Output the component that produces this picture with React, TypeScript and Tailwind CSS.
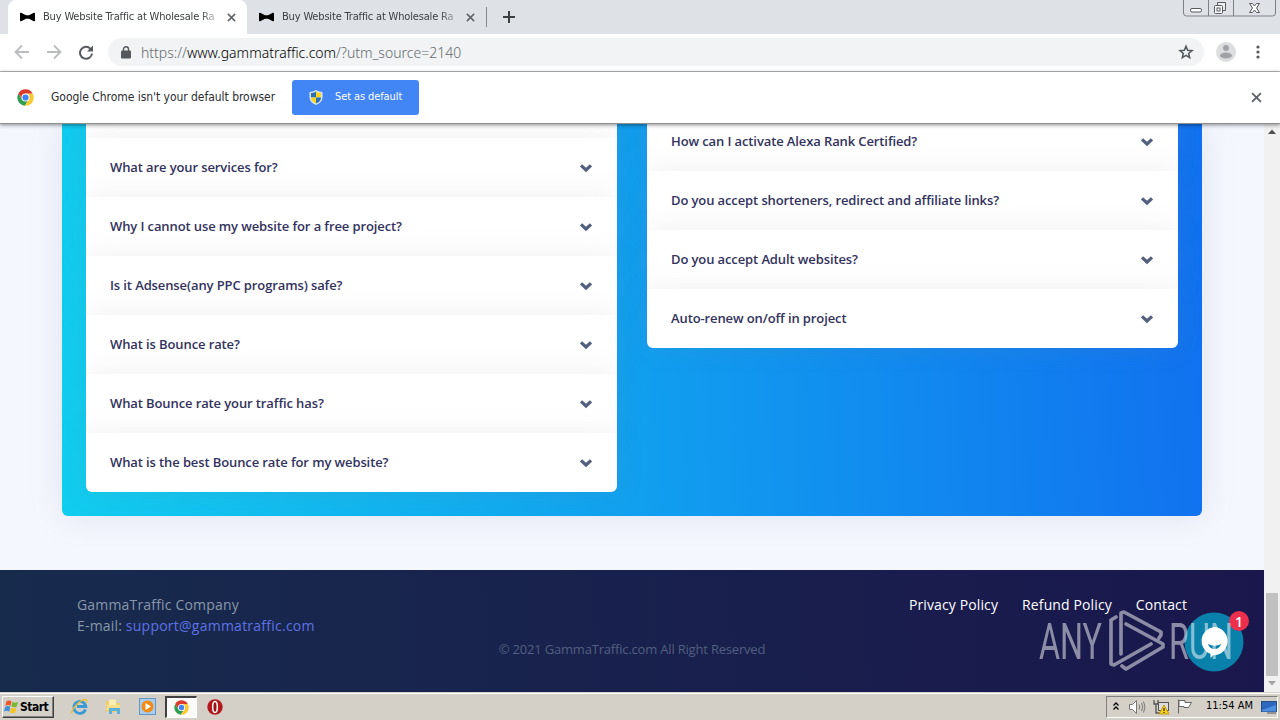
import type { ReactNode } from 'react';
import { clsx } from 'clsx';

const LEFT_QUESTIONS = [
  '',
  'What are your services for?',
  'Why I cannot use my website for a free project?',
  'Is it Adsense(any PPC programs) safe?',
  'What is Bounce rate?',
  'What Bounce rate your traffic has?',
  'What is the best Bounce rate for my website?',
];

const RIGHT_QUESTIONS = [
  'How can I activate Alexa Rank Certified?',
  'Do you accept shorteners, redirect and affiliate links?',
  'Do you accept Adult websites?',
  'Auto-renew on/off in project',
];

const FOOTER_LINKS = ['Privacy Policy', 'Refund Policy', 'Contact'];

function CloseIcon({ size, className }: { size: number; className?: string }) {
  return (
    <svg width={size} height={size} viewBox="0 0 10 10" className={className} fill="none" stroke="currentColor" strokeWidth="1.7">
      <path d="M1 1l8 8M9 1l-8 8" />
    </svg>
  );
}

function ChromeLogo({ size }: { size: number }) {
  return (
    <svg width={size} height={size} viewBox="0 0 48 48" className="shrink-0">
      <circle cx="24" cy="24" r="23" fill="#fff" />
      <path d="M4.1 12.5A23 23 0 0 0 22 47L33 29.5 24 24 14 29.5z" fill="#2f9e4e" />
      <path d="M44 12.5A23 23 0 0 1 22 47L33.5 29 33 19 24 13h20z" fill="#fbc92f" />
      <path d="M24 12.5h20A23 23 0 0 0 4 12.5L14 29z" fill="#db3a2c" />
      <circle cx="24" cy="24" r="11.5" fill="#fff" />
      <circle cx="24" cy="24" r="8.8" fill="#4285f4" />
    </svg>
  );
}

function BowTie() {
  return (
    <svg width="15" height="10" viewBox="0 0 15 10" className="shrink-0">
      <path d="M0 1.5Q0 .5 1.2.8L6 3.2h3L13.8.8Q15 .5 15 1.5v7q0 1-1.2.7L9 6.800H6L1.200 9.200Q0 9.500 0 8.500z" fill="#000" />
    </svg>
  );
}

function Tab({ active, children }: { active?: boolean; children: ReactNode }) {
  return (
    <div
      className={clsx(
        'flex h-[34px] shrink-0 items-center rounded-t-lg pl-3',
        active ? 'w-[239px] bg-white' : 'w-[240px] bg-transparent',
      )}
    >
      <BowTie />
      <span className="ml-2 w-[175px] overflow-hidden whitespace-nowrap text-[11px] tracking-[-0.17px] text-[#3c4043] [mask-image:linear-gradient(90deg,#000_90%,rgba(0,0,0,0.2))]">
        {children}
      </span>
      <CloseIcon size={9} className="ml-[9px] shrink-0 text-[#5f6368]" />
    </div>
  );
}

function TabStrip() {
  return (
    <div className="flex h-[34px] shrink-0 items-start bg-[#dee1e6] pl-2">
      <Tab active>Buy Website Traffic at Wholesale Ra</Tab>
      <Tab>Buy Website Traffic at Wholesale Ra</Tab>
      <div className="mt-[7px] -ml-px h-5 w-px bg-[#878b90]" />
      <svg width="12" height="12" viewBox="0 0 12 12" className="mt-[11px] ml-4" stroke="#3c4043" strokeWidth="2">
        <path d="M6 0v12M0 6h12" />
      </svg>
      <svg width="94" height="18" viewBox="0 0 94 18" className="mr-[3px] ml-auto" fill="none">
        <path d="M.5 0v13q0 3 3 3h86q3 0 3-3V0M25.500 0v16M50.500 0v16" stroke="#7d828a" />
        <rect x="7.500" y="8.500" width="11" height="3.500" rx="1.500" fill="#fff" stroke="#555a63" />
        <path d="M34.500 2.500h8v8h-8z" fill="#eee" stroke="#555a63" />
        <rect x="31.500" y="5.500" width="8" height="8" rx="1" fill="#fff" stroke="#555a63" />
        <rect x="34" y="8" width="3" height="3" stroke="#555a63" />
        <path d="M66.500 3.500h3l2 2.500 2-2.500h3L73.500 8l3 4.500h-3l-2-2.500-2 2.500h-3l3-4.500z" fill="#fff" stroke="#555a63" />
      </svg>
    </div>
  );
}

function Toolbar() {
  return (
    <div className="flex h-[38px] shrink-0 items-center border-b border-[#b6b6b6] bg-white pb-px">
      <svg width="80" height="16" viewBox="0 0 80 16" className="ml-[14px] shrink-0" fill="none" strokeWidth="1.800">
        <path d="M15 8H2M8 1.500L1.500 8 8 14.500M33 8h13M40 1.500L46.500 8 40 14.500" stroke="#babcbe" />
        <path d="M76.500 4.800A6 6 0 1 0 78 9.500" stroke="#55585c" strokeWidth="2" />
        <path d="M79 1.500v6h-6z" fill="#55585c" />
      </svg>
      <div className="ml-[14px] flex h-7 w-[1096px] items-center rounded-full bg-[#f1f3f4] pr-[10px] pl-[13px]">
        <svg width="10" height="13" viewBox="0 0 10 13" className="shrink-0">
          <rect y="4.500" width="10" height="8" rx="1" fill="#55585c" />
          <path d="M2.500 5V3.200a2.500 2.500 0 0 1 5 0V5" fill="none" stroke="#55585c" strokeWidth="1.400" />
        </svg>
        <span className="ml-[10px] font-['Noto_Sans'] text-[14px] font-light whitespace-nowrap text-[#666a6e]">
          https://<span className="text-black">www.gammatraffic.com</span>/?utm_source=2140
        </span>
        <svg width="16" height="16" viewBox="0 0 24 24" className="ml-auto" fill="none" stroke="#55585c" strokeWidth="2.300">
          <path d="M12 3.500l2.500 6 6.500.5-5 4.200 1.500 6.300L12 17.200l-5.500 3.300L8 14.200 3 10l6.500-.5z" />
        </svg>
      </div>
      <svg width="20" height="20" viewBox="0 0 20 20" className="ml-3">
        <circle cx="10" cy="10" r="10" fill="#dcdddf" />
        <circle cx="10" cy="6" r="3" fill="#a0a2a5" />
        <ellipse cx="10" cy="13.500" rx="6" ry="3" fill="#a0a2a5" />
      </svg>
      <svg width="4" height="16" viewBox="0 0 4 16" className="ml-[20px]" fill="#55585c">
        <circle cx="2" cy="3" r="1.600" />
        <circle cx="2" cy="8" r="1.600" />
        <circle cx="2" cy="13" r="1.600" />
      </svg>
    </div>
  );
}

function InfoBar() {
  return (
    <div className="relative z-10 flex h-[52px] shrink-0 items-center border-b border-[#8f8f8f] bg-white pl-[17px] shadow-[0_1px_4px_rgba(0,0,0,0.45)]">
      <ChromeLogo size={17} />
      <span className="mb-px ml-[17px] w-[241px] text-[12px] tracking-[-0.04px] whitespace-nowrap text-[#2b2d30]">
        Google Chrome isn't your default browser
      </span>
      <button className="flex h-[35px] w-[127px] items-center rounded-[3px] bg-[#4285f4] pl-[17px] text-[11px] tracking-[-0.1px] whitespace-nowrap text-white">
        <svg width="14" height="15" viewBox="0 0 14 15" className="mr-3 shrink-0">
          <path d="M7 0Q4 2 .5 2V7q0 5.500 6.500 8 6.500-2.500 6.500-8V2Q10 2 7 0z" fill="#d8e6f5" />
          <path d="M7 1.500Q4.500 3 2 3v4.500h5z" fill="#2f6fb5" />
          <path d="M7 1.500Q9.500 3 12 3v4.500H7z" fill="#fbd41c" />
          <path d="M2 7.500h5v6Q2 11.500 2 7.500z" fill="#fbd41c" />
          <path d="M12 7.500H7v6q5-2 5-6z" fill="#2f6fb5" />
        </svg>
        Set as default
      </button>
      <CloseIcon size={11} className="mr-[18px] ml-auto text-[#5f6368]" />
    </div>
  );
}

function QuestionList({ questions, className }: { questions: string[]; className?: string }) {
  return (
    <div className={clsx('w-[531px]', className)}>
      {questions.map((question, index) => (
        <div
          key={index}
          className="flex h-[59px] items-center justify-between bg-white px-6 shadow-[0_0_28px_rgba(130,130,140,0.13)] last:rounded-b-md"
        >
          <span className="text-[13px] font-semibold tracking-[-0.11px] text-[#32325d]">{question}</span>
          <svg width="14" height="10" viewBox="0 0 14 10" fill="none" stroke="#525f7f" strokeWidth="3.200">
            <path d="M2 2.300l5 4.700 5-4.700" />
          </svg>
        </div>
      ))}
    </div>
  );
}

function Footer() {
  return (
    <footer className="h-[122px] bg-[linear-gradient(87deg,#172b4d,#1a174d)] px-[77px] pt-6 text-[14px] leading-[21px]">
      <div className="flex justify-between">
        <div className="tracking-[0.18px] text-[#8898aa]">
          <p>GammaTraffic Company</p>
          <p>
            E-mail: <a className="tracking-[0.24px] text-[#5e72e4]">support@gammatraffic.com</a>
          </p>
        </div>
        <nav className="flex gap-6 tracking-[0.12px] text-white">
          {FOOTER_LINKS.map((link) => (
            <a key={link}>{link}</a>
          ))}
        </nav>
      </div>
      <p className="mt-[3px] text-center text-[13px] tracking-[-0.19px] text-[#525f7f]">
        © 2021 GammaTraffic.com All Right Reserved
      </p>
    </footer>
  );
}

function ScrollBar() {
  return (
    <div className="flex w-4 shrink-0 flex-col items-center bg-[#f1f1f1]">
      <svg width="8" height="5" viewBox="0 0 8 5" className="mt-[5px]">
        <path d="M0 5l4-4.500L8 5z" fill="#505050" />
      </svg>
      <div className="mt-auto h-[83px] w-3 bg-[#c1c1c1]" />
      <svg width="8" height="5" viewBox="0 0 8 5" className="mt-[5px] mb-[6px]">
        <path d="M0 0l4 4.500L8 0z" fill="#a3a3a3" />
      </svg>
    </div>
  );
}

function ChatBubble() {
  return (
    <div className="absolute right-[20px] bottom-[20px] h-[60px] w-[60px]">
      <svg width="60" height="60" viewBox="0 0 60 60">
        <circle cx="30" cy="30" r="29.500" fill="#0a81aa" />
        <path d="M30 15a14 14 0 1 1-1 28.200L26.500 46v-4A14 14 0 0 1 30 15z" fill="#fff" />
        <path d="M24 32q7 3.500 13 0-1.500 5-6.500 5T24 32z" fill="#0a81aa" />
      </svg>
      <div className="absolute -top-px -right-[5px] flex h-5 w-5 items-center justify-center rounded-full bg-[#eb2f4c] text-[14px] font-semibold text-white">
        1
      </div>
    </div>
  );
}

function Watermark() {
  return (
    <svg width="200" height="64" viewBox="0 0 200 64" className="absolute right-[44px] bottom-[20px] opacity-50">
      <g fill="#fff" fontFamily="Roboto" fontWeight="400" fontSize="50">
        <text x="3" y="51" textLength="63" lengthAdjust="spacingAndGlyphs">
          ANY
        </text>
        <text x="133" y="51" textLength="64" lengthAdjust="spacingAndGlyphs">
          RUN
        </text>
      </g>
      <path
        d="M80 9l-5 3v44l3 1 37-21M85 46V5l3-1 37 20v3l-2 3M90 16l37 20v3L90 61l-4-3"
        fill="none"
        stroke="#fff"
        strokeWidth="3.600"
        strokeLinejoin="round"
        strokeLinecap="round"
      />
    </svg>
  );
}

function Taskbar() {
  return (
    <div className="flex h-7 shrink-0 items-center border-t border-[#d4d0c8] bg-[#d4d0c8] font-['DejaVu_Sans_Condensed','DejaVu_Sans',sans-serif] shadow-[inset_0_1px_0_#fff]">
      <div className="ml-[2px] flex h-[22px] w-[52px] items-center border border-t-white border-r-[#404040] border-b-[#404040] border-l-white pl-px text-[12px] font-bold tracking-[-0.5px] shadow-[inset_-1px_-1px_0_#808080]">
        <svg width="15" height="15" viewBox="0 0 16 16" className="mr-px shrink-0">
          <path d="M2.500 2.500q3-2 5.500 0L7 7.500q-2.500-2-5.500 0z" fill="#e8582a" />
          <path d="M9 3q3 2 6 0l-1.500 5Q11 9.500 8 8z" fill="#7ab72f" />
          <path d="M1.200 8.500q3-2 5.500 0l-1.200 5Q3 11.500 0 13.500z" fill="#3f8fd8" />
          <path d="M7.700 9q3 2 5.500 0L12 14q-3 2-5.500 0z" fill="#f9c21a" />
        </svg>
        Start
      </div>
      <div className="ml-[17px] flex items-center">
        <svg width="17" height="17" viewBox="0 0 17 17">
          <path d="M14.500 11.500A6 6 0 1 1 14.800 8.500H6" fill="none" stroke="#3a9ad6" strokeWidth="2.800" />
          <path d="M1 15.500C-.5 12 9 1.500 14.500 1.500q2 .5.500 3.500" fill="none" stroke="#e9bd35" strokeWidth="1.400" />
        </svg>
        <svg width="17" height="17" viewBox="0 0 17 17" className="ml-[17px]">
          <path d="M1 3h5l1 2h8v9H1z" fill="#efcf6d" />
          <path d="M4 1.500h7v6H4z" fill="#f8edb5" />
          <path d="M2 7h13v5H2z" fill="#f5e08c" />
          <path d="M4 10h11v6h-3v-3H7v3H4z" fill="#5cb0dc" />
        </svg>
        <svg width="17" height="17" viewBox="0 0 17 17" className="ml-[17px]">
          <rect x=".5" y=".5" width="16" height="16" fill="#a9cdea" stroke="#6497c4" />
          <circle cx="8.500" cy="8.500" r="6" fill="#f28a16" />
          <path d="M6.500 5l5.500 3.500-5.500 3.500z" fill="#fff" />
        </svg>
        <div className="ml-[9px] flex h-[22px] w-[32px] items-center justify-center border-t-2 border-r border-b border-l-2 border-t-[#404040] border-r-white border-b-white border-l-[#404040] bg-[#fbfaf8]">
          <ChromeLogo size={15} />
        </div>
        <svg width="16" height="16" viewBox="0 0 16 16" className="ml-[10px]">
          <circle cx="8" cy="8" r="7.700" fill="#b3161b" />
          <ellipse cx="8" cy="8" rx="2.300" ry="5.500" fill="#a01015" stroke="#fff" strokeWidth="1.500" />
        </svg>
      </div>
      <div className="mr-[2px] ml-auto flex h-[22px] w-[172px] items-center border border-t-[#808080] border-r-white border-b-white border-l-[#808080] pl-[6px] text-[11px]">
        <svg width="6" height="9" viewBox="0 0 6 9" fill="none" stroke="#000" strokeWidth="1.300">
          <path d="M.5 3.500L3 1l2.500 2.500M.5 7.500L3 5l2.500 2.500" />
        </svg>
        <svg width="17" height="16" viewBox="0 0 17 16" className="ml-[10px]" fill="none" stroke="#777">
          <path d="M.5 5.500h3l4-4v13l-4-4h-3z" fill="#fff" />
          <path d="M10 5.500q1.500 2.500 0 5M12.500 4q2.500 4 0 8M14.500 2.500q3 5.500 0 11" />
        </svg>
        <svg width="17" height="16" viewBox="0 0 17 16" className="ml-[7px]" fill="none">
          <rect x="5.500" y="3.500" width="10" height="8" fill="#ddd" stroke="#555" />
          <path d="M1 1v4h4V1M3 5v9h6" stroke="#555" strokeWidth="1.300" />
          <path d="M11 6l5 9H6z" fill="#f7d11e" stroke="#c39a10" />
          <path d="M11 9v3M11 13v1" stroke="#000" />
        </svg>
        <svg width="16" height="15" viewBox="0 0 16 15" className="ml-[7px]" fill="#fff" stroke="#666">
          <path d="M1.500.5v14M2 1.500h6v2h6.500l-3 5H7v-1H2z" />
        </svg>
        <span className="ml-[13px] whitespace-nowrap">11:54 AM</span>
        <svg width="16" height="14" viewBox="0 0 16 14" className="ml-auto">
          <rect x=".5" y="1.500" width="15" height="10" fill="#2d66bd" stroke="#244d8c" />
          <path d="M1 10l14-5v6.500H1z" fill="#4f8fdf" />
          <path d="M6 13h9" stroke="#555" />
        </svg>
      </div>
    </div>
  );
}

export default function App() {
  return (
    <div className="flex h-[720px] w-[1280px] flex-col overflow-hidden font-['DejaVu_Sans_Condensed','DejaVu_Sans',sans-serif]">
      <TabStrip />
      <Toolbar />
      <InfoBar />
      <div className="flex h-[568px] shrink-0">
        <main className="relative w-[1264px] overflow-hidden bg-[#f5f7fe] font-['Open_Sans',sans-serif]">
          <section className="mx-auto mb-[54px] flex h-[392px] w-[1140px] items-start justify-between rounded-b-md bg-[linear-gradient(87deg,#11cdef,#1171ef)] px-6 shadow-[0_0_32px_rgba(136,152,170,0.2)]">
            <QuestionList questions={LEFT_QUESTIONS} className="-mt-[45px]" />
            <QuestionList questions={RIGHT_QUESTIONS} className="-mt-3" />
          </section>
          <Footer />
          <ChatBubble />
        </main>
        <ScrollBar />
      </div>
      <div className="relative">
        <div className="absolute right-0 bottom-0 h-[82px] w-[250px]">
          <Watermark />
        </div>
      </div>
      <Taskbar />
    </div>
  );
}
